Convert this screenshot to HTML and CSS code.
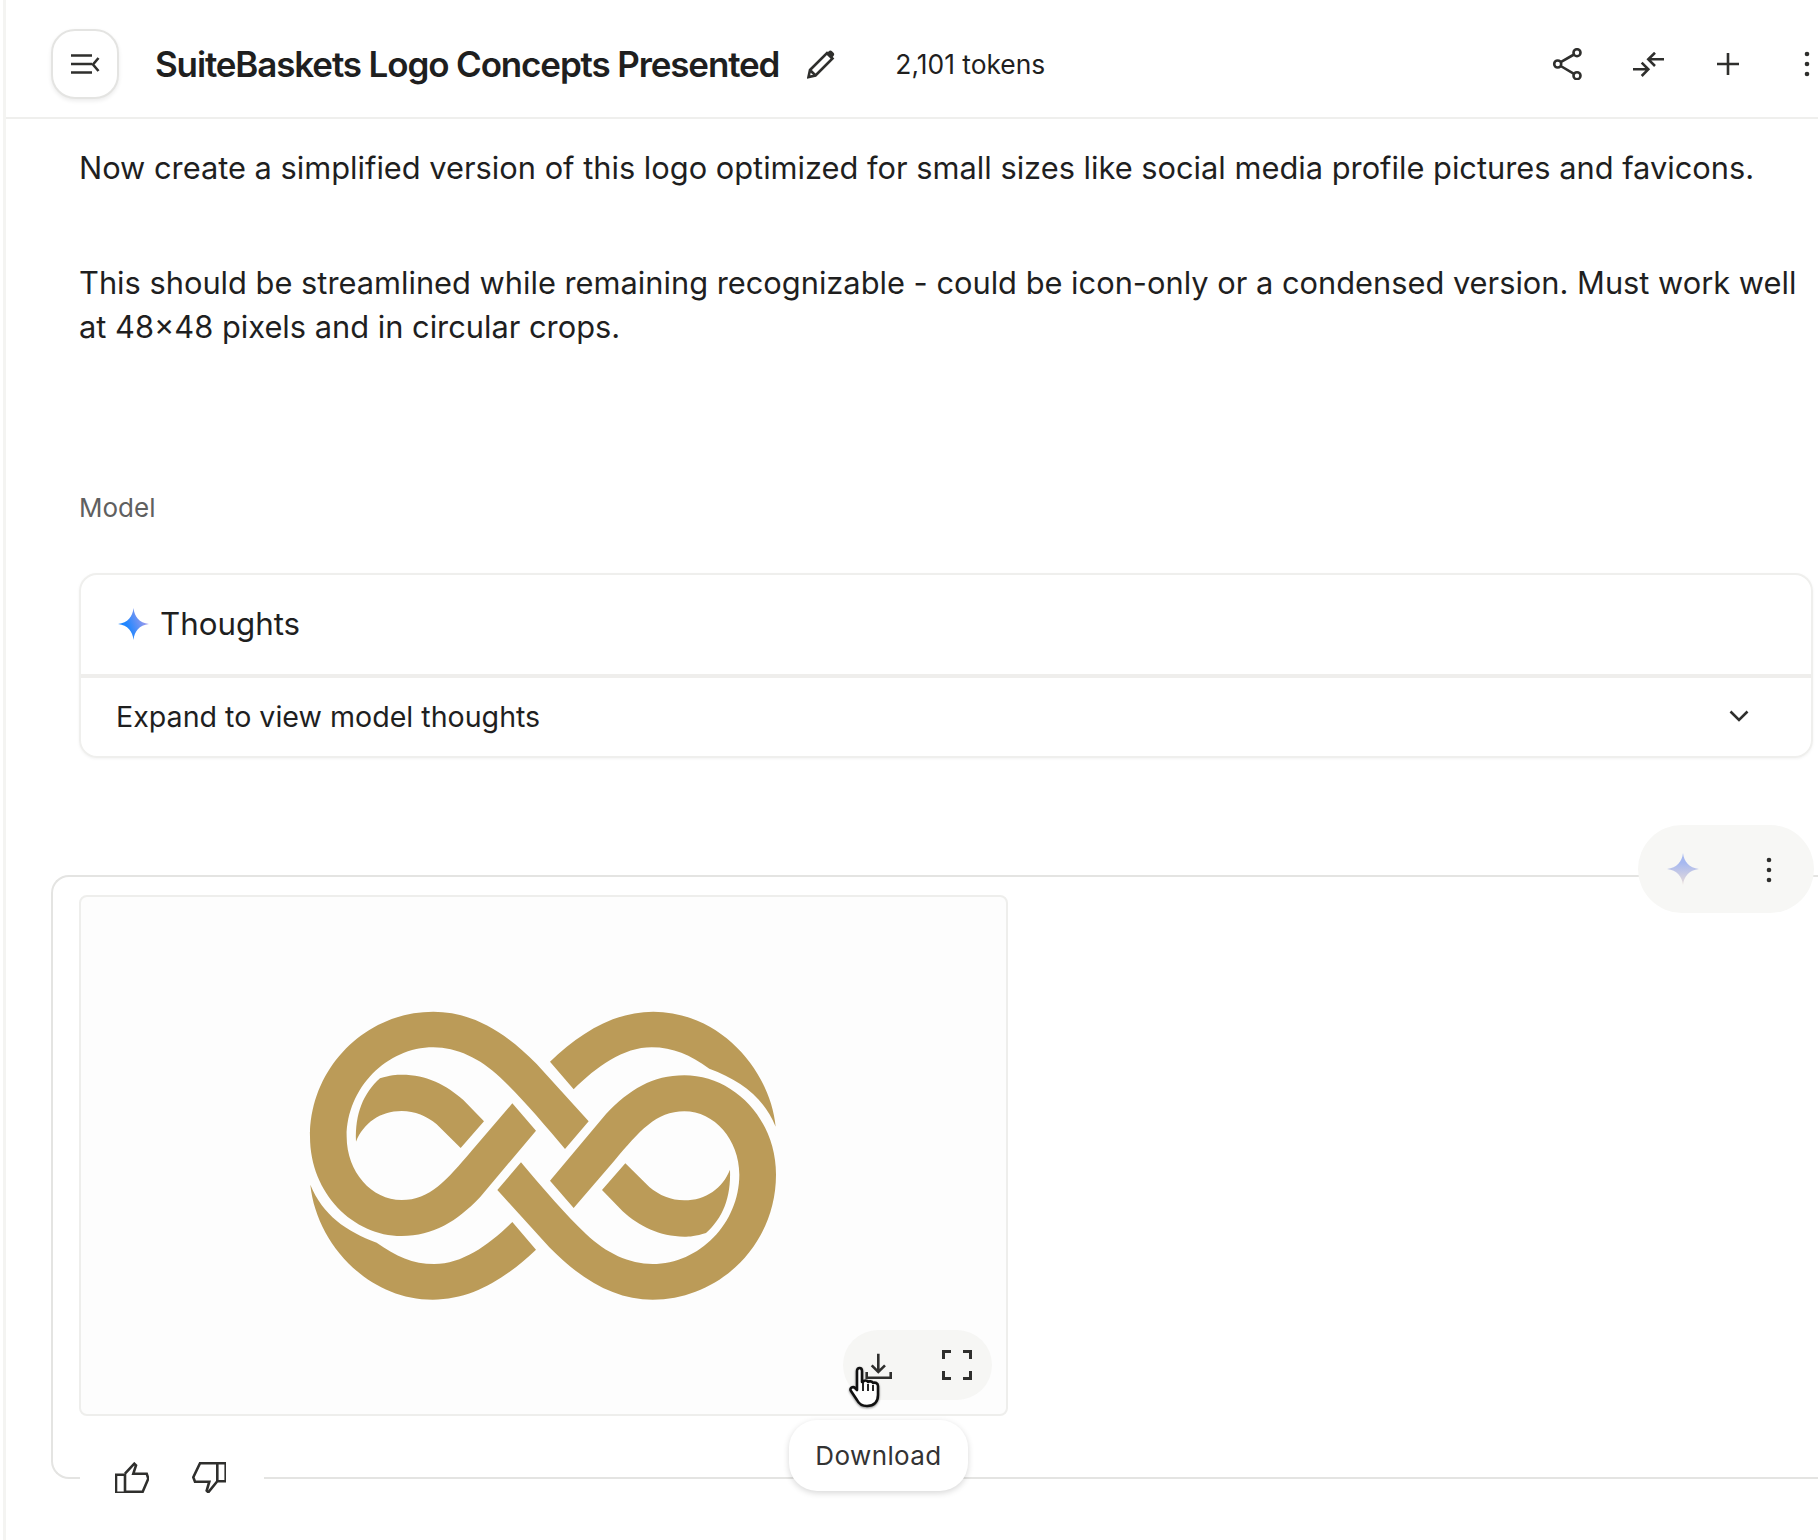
FILE: index.html
```html
<!DOCTYPE html>
<html lang="en">
<head>
<meta charset="utf-8">
<title>SuiteBaskets Logo Concepts Presented</title>
<link rel="stylesheet" href="styles.css">
</head>
<body>
<div class="app">
  <header class="topbar">
    <button class="menu-btn" aria-label="Toggle menu">
      <svg class="ico" width="30" height="20" viewBox="0 0 30 20"><path d="M1 1.500h21M1 10h21M1 18.500h21M28.500 4L23 10.500l5.500 6.500"/></svg>
    </button>
    <h1 class="title">SuiteBaskets Logo Concepts Presented</h1>
    <svg class="ico pencil" width="28" height="30" viewBox="0 0 28 30"><path d="M1.500 28l1.500-7L20 4l5.500 5.500L8.500 26.500zM3 21l5.500 5.500"/><path class="solid" d="M19 5l2.500-2.500c1.200-1.200 2.500-1.200 3.500-.2l1.500 1.500c1 1 1 2.300-.2 3.500L24 9.800z"/></svg>
    <span class="tokens">2,101 tokens</span>
    <div class="top-actions">
      <svg class="ico" width="31" height="32" viewBox="0 0 31 32"><circle cx="5.700" cy="16" r="3.500"/><circle cx="25" cy="4.700" r="3.500"/><circle cx="25" cy="27.700" r="3.500"/><path d="M8.700 14.200l13.300-7.700M8.700 18l13.300 7.900"/></svg>
      <svg class="ico" width="32" height="25" viewBox="0 0 32 25"><path d="M0 17.300h15.300M8.700 10.700l6.600 6.600L8.700 24M31 7.300H15.300M22 .7l-6.700 6.600L22 14"/></svg>
      <svg class="ico" width="22" height="22" viewBox="0 0 22 22"><path d="M0 11h22M11 0v22"/></svg>
      <svg class="dots end" width="6" height="26" viewBox="0 0 6 26"><circle cx="3" cy="3" r="2.300"/><circle cx="3" cy="13" r="2.300"/><circle cx="3" cy="23" r="2.300"/></svg>
    </div>
  </header>
  <main class="content">
    <p class="prompt first">Now create a simplified version of this logo optimized for small sizes like social media profile pictures and favicons.</p>
    <p class="prompt">This should be streamlined while remaining recognizable - could be icon-only or a condensed version. Must work well at 48×48 pixels and in circular crops.</p>
    <div class="role">Model</div>
    <section class="thoughts">
      <div class="thoughts-head">
        <svg width="31" height="32" viewBox="0 0 31 32"><defs><linearGradient id="spark" x1="0" y1="0.700" x2="1" y2="0.300"><stop offset="0.300" stop-color="#1f86ff"/><stop offset="1" stop-color="#b59fe8"/></linearGradient></defs><path fill="url(#spark)" d="M15.500 0C16.500 9 21 14.500 31 16 21 17.500 16.500 23 15.500 32 14.500 23 10 17.500 0 16 10 14.500 14.500 9 15.500 0Z"/></svg>
        <span>Thoughts</span>
      </div>
      <div class="thoughts-body">
        <span>Expand to view model thoughts</span>
        <svg class="ico chevron" width="20" height="12" viewBox="0 0 20 12"><path d="M1.500 1.500L10 10l8.500-8.500"/></svg>
      </div>
    </section>
    <section class="response">
      <div class="float-pill">
        <svg width="32" height="32" viewBox="0 0 32 32"><defs><linearGradient id="spark2" x1="0" y1="0" x2="0" y2="1"><stop offset="0.300" stop-color="#a6b8f0"/><stop offset="1" stop-color="#e9dcd8"/></linearGradient></defs><path fill="url(#spark2)" d="M16 0C17 9 22 14.500 32 16 22 17.500 17 23 16 32 15 23 10 17.500 0 16 10 14.500 15 9 16 0Z"/></svg>
        <svg class="dots" width="6" height="26" viewBox="0 0 6 26"><circle cx="3" cy="3" r="2.300"/><circle cx="3" cy="13" r="2.300"/><circle cx="3" cy="23" r="2.300"/></svg>
      </div>
      <figure class="image-box">
        <svg class="logo" width="520" height="330" viewBox="0 0 1560 990">
          <g fill="#bb9b58">
            <path id="strand" d="M896 394L740 222C640 120 540 65 430 65 230 65 60 230 60 440 60 610 190 738 335 738 430 738 500 695 570 622L738 422 667 340 545 482C470 570 420 630 335 630 245 630 170 545 170 440 170 295 290 172 430 172 500 172 570 205 630 262 690 318 760 400 825 477Z"/>
            <path id="arc" d="M780 215C870 130 970 65 1090 65 1290 65 1440 240 1457 410 1420 320 1350 270 1258 236 1200 195 1150 172 1085 172 1000 172 920 230 851 298Z"/>
            <path id="inner" d="M270 265C300 255 320 254 335 254 410 254 470 285 520 330L582 394 512 474 440 403C410 378 375 363 335 363 270 363 220 400 198 455 195 370 220 310 270 265Z"/>
            <use href="#strand" transform="rotate(180 759 497)"/>
            <use href="#arc" transform="rotate(180 759 497)"/>
            <use href="#inner" transform="rotate(180 759 497)"/>
          </g>
        </svg>
        <div class="image-actions">
          <svg class="ico" width="27" height="27" viewBox="0 0 27 27"><path d="M13.300 1.700V20M6.700 13.300l6.600 6.700 6.700-6.700M1.700 20v5.700h24V20"/></svg>
          <svg class="ico square" width="30" height="30" viewBox="0 0 30 30"><path d="M1.500 9V1.500H9M21 1.500h7.500V9M28.500 21v7.500H21M9 28.500H1.500V21"/></svg>
        </div>
        <svg class="cursor" width="32" height="42" viewBox="0 0 32 42"><path fill="#fff" stroke="#111" stroke-width="2.600" stroke-linejoin="round" d="M8 24V5c0-4 5-4 5 0v11l1 0c1-2 4-2 5 0 1-1 4-1 5 1 2-1 5 0 5 3v9c0 7-4 11-11 11-5 0-8-2-10-6l-6-9c-2-3 2-5 4-3z"/><path fill="none" stroke="#111" stroke-width="1.800" d="M14 17v8M19 18v7M24 19v6"/></svg>
      </figure>
      <div class="feedback">
        <svg class="ico" width="34" height="31" viewBox="0 0 34 31"><path d="M1 12.700h9v18H1zM10 11.700l9.300-10 1.700 1.600-2.700 8.400h13.400l1.600 5-5.600 13H10"/></svg>
        <svg class="ico" width="34" height="31" viewBox="0 0 34 31"><path d="M25.300 1.300h8.400v18h-8.400zM25.300 1.300H8L1.300 15.300 3 19.700h14.300l-2.600 9 1.600 1.600 9-11"/></svg>
      </div>
      <div class="tooltip">Download</div>
    </section>
  </main>
</div>
</body>
</html>
```
FILE: styles.css
```css
* { box-sizing: border-box; }
html, body { margin: 0; height: 1540px; overflow: hidden; background: #fff; }
body { font-family: Inter, "Liberation Sans", sans-serif; color: #1f1f1f; }
.app { height: 1540px; margin-left: 3px; border-left: 3px solid #f4f4f2; }
.ico { fill: none; stroke: #2f2f2d; stroke-width: 2.600; display: block; flex: none; }
.ico .solid { fill: #2f2f2d; stroke: none; }
.dots { fill: #2f2f2d; display: block; flex: none; }

.topbar { height: 119px; border-bottom: 2px solid #efefed; display: flex; align-items: center; padding: 11px 0 0 45px; }
.menu-btn { width: 68px; height: 70px; border: 2px solid #e4e4e2; border-radius: 24px; background: #fff; box-shadow: 0 2px 4px rgba(0,0,0,.08); display: flex; align-items: center; justify-content: center; padding: 0; }
.title { margin: 0 0 0 36px; font-size: 35px; font-weight: 600; letter-spacing: -1.14px; white-space: nowrap; }
.pencil { margin-left: 28px; }
.tokens { margin-left: 60px; font-size: 26.4px; white-space: nowrap; }
.top-actions { margin-left: auto; display: flex; align-items: center; margin-right: 8px; }
.top-actions .ico:nth-child(2) { margin-left: 50px; }
.top-actions .ico:nth-child(3) { margin-left: 52px; }
.top-actions .end { margin-left: 65px; }

.content { padding: 27px 0 0 73px; position: relative; }
.prompt { margin: 0; font-size: 30.8px; line-height: 44px; width: 1738px; }
.prompt.first { margin-bottom: 71px; }
.role { margin-top: 143px; font-size: 26px; line-height: 32px; color: #5f6060; }
.thoughts { margin-top: 49px; width: 1734px; height: 185px; border: 2px solid #efefed; border-radius: 18px; box-shadow: 0 1px 3px rgba(0,0,0,.05); }
.thoughts-head { height: 103px; border-bottom: 4px solid #efeeec; display: flex; align-items: center; gap: 11px; padding: 0 0 1px 37px; font-size: 31.3px; }
.thoughts-body { height: 78px; display: flex; align-items: center; justify-content: space-between; padding: 0 62px 2px 35px; font-size: 28.6px; }

.response { position: relative; margin: 117px 0 0 -28px; width: 1767px; height: 604px; border: 2px solid #e4e4e2; border-right: 0; border-radius: 18px 0 0 18px; padding: 18px 0 0 26px; }
.float-pill { position: absolute; left: 1585px; top: -52px; width: 176px; height: 88px; border-radius: 44px; background: #f7f7f5; display: flex; align-items: center; gap: 67px; padding-left: 29px; }
.float-pill .dots { margin-top: 2px; }
.image-box { margin: 0; position: relative; width: 929px; height: 521px; background: #fdfdfd; border: 2px solid #eeeeec; border-radius: 8px; display: flex; }
.logo { position: absolute; left: 209px; top: 93px; }
.image-actions { position: absolute; left: 762px; top: 433px; width: 149px; height: 70px; border-radius: 35px; background: #f6f6f4; display: flex; align-items: center; gap: 50px; padding-left: 22px; }
.square { stroke-width: 3px; }
.cursor { position: absolute; left: 768px; top: 469px; filter: drop-shadow(0 1px 1px rgba(0,0,0,.45)); }
.feedback { position: absolute; left: 27px; top: 582px; width: 184px; height: 36px; background: #fff; display: flex; align-items: center; gap: 43px; padding-left: 35px; }
.tooltip { position: absolute; left: 736px; top: 543px; width: 179px; height: 71px; border-radius: 28px; background: #fff; box-shadow: 0 2px 6px rgba(0,0,0,.16); display: flex; align-items: center; justify-content: center; font-size: 26px; color: #333; letter-spacing: 0.4px; }
```
